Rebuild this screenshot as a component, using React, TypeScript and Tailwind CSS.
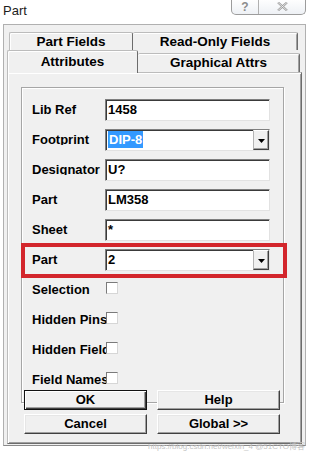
import type { ReactNode } from 'react';

function Field({ label, children, highlight }: { label: string; children: ReactNode; highlight?: boolean }) {
  return (
    <div className="relative flex h-[22px] items-start">
      {highlight && (
        <div className="absolute -left-[11px] -top-[6px] z-20 h-[35px] w-[266px] border-[4px] border-[#d3262c]" />
      )}
      <div className="w-[73px] shrink-0">
        <span className="mt-[3px] block h-[13px] w-[69px] overflow-hidden whitespace-nowrap text-[13px] font-bold leading-[16px]">
          {label}
        </span>
      </div>
      {children}
    </div>
  );
}

function CheckRow({ label }: { label: string }) {
  return (
    <div className="flex h-[22px] items-start">
      <span className="mt-[3px] block h-[14px] w-[74px] shrink-0 overflow-hidden whitespace-nowrap text-[13px] font-bold leading-[16px]">
        {label}
      </span>
      <div className="mt-[3px] h-[12px] w-[12px] border border-t-[#7a7a7a] border-l-[#7a7a7a] border-r-[#d6d6d6] border-b-[#d6d6d6] bg-white" />
    </div>
  );
}

function TextBox({ value, combo, selected }: { value: string; combo?: boolean; selected?: boolean }) {
  return (
    <div className="flex h-[22px] w-[165px] shrink-0 border border-t-[#7f7f7f] border-l-[#7f7f7f] border-r-[#e2e2e2] border-b-[#e2e2e2] bg-white shadow-[inset_1px_1px_0_#3a3a3a]">
      <div className="flex-1 pl-[2px] text-[13px] font-bold leading-[20px] text-black">
        {selected ? <span className="bg-[#3399ff] px-[1px] py-[1px] text-white">{value}</span> : value}
      </div>
      {combo && (
        <div className="flex h-[20px] w-[16px] items-center justify-center border border-t-white border-l-[#b4b4b4] border-r-[#404040] border-b-[#404040] bg-[#f0f0f0] shadow-[inset_-1px_-1px_0_#a0a0a0]">
          <svg width="7" height="4" viewBox="0 0 7 4" className="mt-[1px]">
            <polygon points="0,0 7,0 3.5,4" fill="#000" />
          </svg>
        </div>
      )}
    </div>
  );
}

function Btn({ children, primary }: { children: ReactNode; primary?: boolean }) {
  return (
    <div
      className={
        primary
          ? 'h-[20px] border border-[#111] bg-[#f0f0f0] text-center text-[13px] font-bold leading-[18px] shadow-[inset_1px_1px_0_#fff,inset_-1px_-1px_0_#404040,inset_-2px_-2px_0_#a0a0a0]'
          : 'h-[20px] border border-t-white border-l-white border-r-[#404040] border-b-[#404040] bg-[#f0f0f0] text-center text-[13px] font-bold leading-[18px] shadow-[inset_-1px_-1px_0_#a0a0a0,inset_1px_1px_0_#e6e6e6]'
      }
    >
      {children}
    </div>
  );
}

export default function App() {
  return (
    <div className="relative h-[452px] w-[309px] overflow-hidden bg-white font-['Liberation_Sans',Arial,sans-serif] text-black">
      {/* title bar */}
      <div className="flex h-[24px] items-start justify-between">
        <span className="pl-[3px] pt-[3px] text-[13px] leading-[16px] text-[#1c1c1c]">Part</span>
        <div className="mr-[3px] -mt-px flex h-[16px] rounded-b-[5px] border border-t-0 border-[#9c9c9c] bg-gradient-to-b from-white to-[#eef1f5]">
          <div className="flex w-[27px] items-center justify-center border-r border-[#b0b0b0] text-[12px] font-bold leading-[14px] text-[#8c8c8c]">
            ?
          </div>
          <div className="flex w-[46px] items-center justify-center">
            <svg width="11" height="9" viewBox="0 0 11 9">
              <path d="M1 0.5 L10 8.5 M10 0.5 L1 8.5" stroke="#9a9a9a" strokeWidth="2.2" fill="none" />
              <path d="M1 0.5 L10 8.5 M10 0.5 L1 8.5" stroke="#f4f4f4" strokeWidth="0.8" fill="none" />
            </svg>
          </div>
        </div>
      </div>

      {/* dialog frame */}
      <div className="ml-[3px] h-[422px] w-[303px] border border-[#b0b0b0] border-b-[#8a8a8a] bg-[#f0f0f0] pl-[3px] pt-[7px]">
        {/* back tab row */}
        <div className="ml-[2px] flex h-[18px]">
          <div className="w-[124px] rounded-t-[2px] border-l border-t border-r border-l-[#bcbcbc] border-t-[#bcbcbc] border-r-[#6c6c6c] text-center text-[13.5px] font-bold leading-[18px] shadow-[inset_1px_1px_0_#fff]">
            Part Fields
          </div>
          <div className="w-[165px] rounded-t-[2px] border-t border-r border-t-[#bcbcbc] border-r-[#6c6c6c] text-center text-[13.5px] font-bold leading-[18px] shadow-[inset_0_1px_0_#fff,inset_-1px_0_0_#a0a0a0]">
            Read-Only Fields
          </div>
        </div>
        {/* front tab row */}
        <div className="flex h-[22px] items-start">
          <div className="relative z-10 h-[23px] w-[131px] rounded-t-[2px] border-l border-t border-r border-l-[#bcbcbc] border-t-[#bcbcbc] border-r-[#6c6c6c] bg-[#f0f0f0] pt-[2px] text-center text-[13.5px] font-bold leading-[17px] shadow-[inset_1px_1px_0_#fff]">
            Attributes
          </div>
          <div className="mt-[3px] h-[19px] w-[162px] rounded-t-[2px] border-t border-r border-t-[#bcbcbc] border-r-[#6c6c6c] text-center text-[13.5px] font-bold leading-[18px] shadow-[inset_0_1px_0_#fff,inset_-1px_0_0_#a0a0a0]">
            Graphical Attrs
          </div>
        </div>

        {/* tab panel */}
        <div className="h-[372px] w-[295px] border border-t-[#bcbcbc] border-l-[#bcbcbc] border-r-[#6c6c6c] border-b-[#6c6c6c] pl-[13px] pt-[14px] shadow-[inset_1px_1px_0_#fff,inset_-1px_-1px_0_#a0a0a0]">
          <div className="h-[316px] w-[263px] border border-[#a6a6a6] pl-[10px] pt-[11px] shadow-[1px_1px_0_#fff,inset_1px_1px_0_#fff]">
            <div className="flex flex-col gap-[8px]">
              <Field label="Lib Ref">
                <TextBox value="1458" />
              </Field>
              <Field label="Footprint">
                <TextBox value="DIP-8" combo selected />
              </Field>
              <Field label="Designator">
                <TextBox value="U?" />
              </Field>
              <Field label="Part">
                <TextBox value="LM358" />
              </Field>
              <Field label="Sheet">
                <TextBox value="*" />
              </Field>
              <Field label="Part" highlight>
                <TextBox value="2" combo />
              </Field>
              <CheckRow label="Selection" />
              <CheckRow label="Hidden Pins" />
              <CheckRow label="Hidden Fields" />
              <CheckRow label="Field Names" />
            </div>
          </div>

          <div className="relative z-10 -mt-[13px] ml-[3px] grid grid-cols-[123px_123px] gap-x-[10px] gap-y-[4px]">
            <Btn primary>OK</Btn>
            <Btn>Help</Btn>
            <Btn>Cancel</Btn>
            <Btn>Global &gt;&gt;</Btn>
          </div>
        </div>
      </div>

      {/* faint watermark */}
      <div className="absolute bottom-[0px] right-[4px] whitespace-nowrap font-['Liberation_Sans','Noto_Sans_CJK_SC',sans-serif] text-[8px] leading-[10px] text-[#c4c4c4]">
        https://blog.csdn.net/weixin_4 @51CTO博客
      </div>
    </div>
  );
}
